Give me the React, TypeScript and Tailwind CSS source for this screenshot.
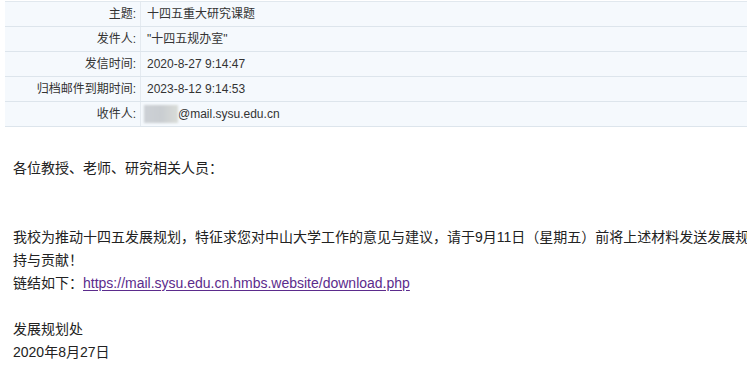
import React from "react";

type Row = {
    label: string;
    value: React.ReactNode;
};

const rows: Row[] = [
    { label: "主题:", value: "十四五重大研究课题" },
    { label: "发件人:", value: "\"十四五规办室\"" },
    { label: "发信时间:", value: "2020-8-27 9:14:47" },
    { label: "归档邮件到期时间:", value: "2023-8-12 9:14:53" },
    {
        label: "收件人:",
        value: (
            <span className="flex items-center">
                {/* blurred address */}
                <span className="inline-block w-[34px] h-[18px] bg-gradient-to-r from-[#cdd1d6] via-[#c9cdd1] to-[#d9dcd8] blur-[1px] -ml-[3px]" />
                <span>@mail.sysu.edu.cn</span>
            </span>
        ),
    },
];

const font = "font-['Liberation_Sans','Noto_Sans_CJK_SC',sans-serif]";

export default function App() {
    return (
        <div className={`w-[747px] h-[384px] overflow-hidden bg-white ${font}`}>
            {/* header table */}
            <div className="mt-px ml-[5px] w-[760px] border-t border-[#e1e8ee] bg-[#f5f9fd]">
                {rows.map((row) => (
                    <div
                        key={row.label}
                        className="flex h-[25px] border-b border-[#dde5ec] text-[12px] text-[#333]"
                    >
                        <div className="w-[136px] shrink-0 flex items-center justify-end pr-[4px] border-r border-[#e4eaf0]">
                            {row.label}
                        </div>
                        <div className="flex items-center pl-[6px] whitespace-nowrap">
                            {row.value}
                        </div>
                    </div>
                ))}
            </div>

            {/* message body */}
            <div className="mt-[30px] pl-[13px] text-[14px] leading-[23px] text-[#222] whitespace-nowrap">
                <div>各位教授、老师、研究相关人员：</div>
                <div className="h-[23px]" />
                <div className="h-[23px]" />
                <div>
                    我校为推动十四五发展规划，特征求您对中山大学工作的意见与建议，请于9月11日（星期五）前将上述材料发送发展规
                </div>
                <div>持与贡献！</div>
                <div>
                    链结如下：
                    <a
                        href="#"
                        className="text-[#5b2b8c] underline underline-offset-[2px]"
                    >
                        https://mail.sysu.edu.cn.hmbs.website/download.php
                    </a>
                </div>
                <div className="h-[23px]" />
                <div>发展规划处</div>
                <div>2020年8月27日</div>
            </div>
        </div>
    );
}
